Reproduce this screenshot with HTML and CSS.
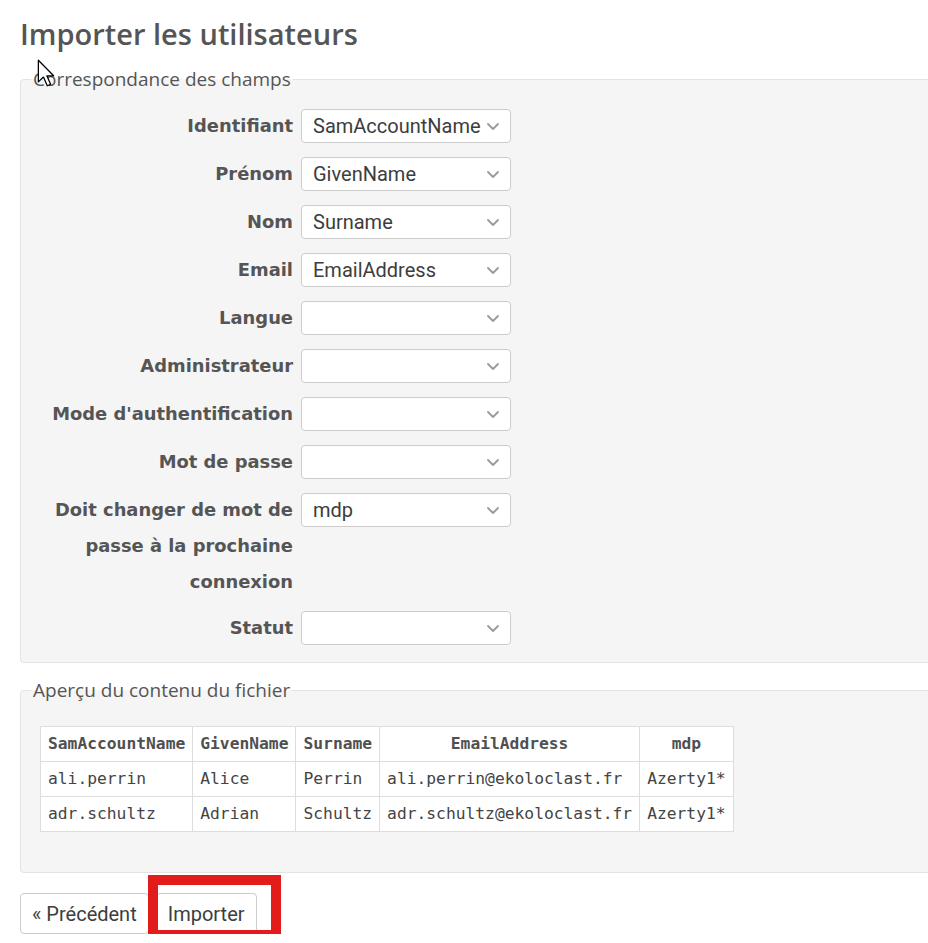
FILE: index.html
```html
<!DOCTYPE html>
<html lang="fr">
<head>
<meta charset="utf-8">
<title>Importer les utilisateurs</title>
<link rel="stylesheet" href="styles.css">
</head>
<body>
<div class="page">
  <h1 class="title">Importer les utilisateurs</h1>

  <fieldset class="panel panel-map">
    <legend class="panel-legend">Correspondance des champs</legend>
    <div class="form-grid">
      <div class="field-label">Identifiant</div>
      <div class="select"><span class="select-value">SamAccountName</span><svg class="chev" viewBox="0 0 12 7" width="12" height="7"><path d="M1 1 L6 6 L11 1" fill="none" stroke="#9a9a9a" stroke-width="1.8" stroke-linecap="round" stroke-linejoin="round"/></svg></div>

      <div class="field-label">Prénom</div>
      <div class="select"><span class="select-value">GivenName</span><svg class="chev" viewBox="0 0 12 7" width="12" height="7"><path d="M1 1 L6 6 L11 1" fill="none" stroke="#9a9a9a" stroke-width="1.8" stroke-linecap="round" stroke-linejoin="round"/></svg></div>

      <div class="field-label">Nom</div>
      <div class="select"><span class="select-value">Surname</span><svg class="chev" viewBox="0 0 12 7" width="12" height="7"><path d="M1 1 L6 6 L11 1" fill="none" stroke="#9a9a9a" stroke-width="1.8" stroke-linecap="round" stroke-linejoin="round"/></svg></div>

      <div class="field-label">Email</div>
      <div class="select"><span class="select-value">EmailAddress</span><svg class="chev" viewBox="0 0 12 7" width="12" height="7"><path d="M1 1 L6 6 L11 1" fill="none" stroke="#9a9a9a" stroke-width="1.8" stroke-linecap="round" stroke-linejoin="round"/></svg></div>

      <div class="field-label">Langue</div>
      <div class="select"><span class="select-value"></span><svg class="chev" viewBox="0 0 12 7" width="12" height="7"><path d="M1 1 L6 6 L11 1" fill="none" stroke="#9a9a9a" stroke-width="1.8" stroke-linecap="round" stroke-linejoin="round"/></svg></div>

      <div class="field-label">Administrateur</div>
      <div class="select"><span class="select-value"></span><svg class="chev" viewBox="0 0 12 7" width="12" height="7"><path d="M1 1 L6 6 L11 1" fill="none" stroke="#9a9a9a" stroke-width="1.8" stroke-linecap="round" stroke-linejoin="round"/></svg></div>

      <div class="field-label">Mode d'authentification</div>
      <div class="select"><span class="select-value"></span><svg class="chev" viewBox="0 0 12 7" width="12" height="7"><path d="M1 1 L6 6 L11 1" fill="none" stroke="#9a9a9a" stroke-width="1.8" stroke-linecap="round" stroke-linejoin="round"/></svg></div>

      <div class="field-label">Mot de passe</div>
      <div class="select"><span class="select-value"></span><svg class="chev" viewBox="0 0 12 7" width="12" height="7"><path d="M1 1 L6 6 L11 1" fill="none" stroke="#9a9a9a" stroke-width="1.8" stroke-linecap="round" stroke-linejoin="round"/></svg></div>

      <div class="field-label field-label-long">Doit changer de mot de passe à la prochaine connexion</div>
      <div class="select"><span class="select-value">mdp</span><svg class="chev" viewBox="0 0 12 7" width="12" height="7"><path d="M1 1 L6 6 L11 1" fill="none" stroke="#9a9a9a" stroke-width="1.8" stroke-linecap="round" stroke-linejoin="round"/></svg></div>

      <div class="field-label">Statut</div>
      <div class="select"><span class="select-value"></span><svg class="chev" viewBox="0 0 12 7" width="12" height="7"><path d="M1 1 L6 6 L11 1" fill="none" stroke="#9a9a9a" stroke-width="1.8" stroke-linecap="round" stroke-linejoin="round"/></svg></div>
    </div>
  </fieldset>

  <fieldset class="panel panel-preview">
    <legend class="panel-legend">Aperçu du contenu du fichier</legend>
    <table class="preview">
      <thead>
        <tr><th>SamAccountName</th><th>GivenName</th><th>Surname</th><th>EmailAddress</th><th>mdp</th></tr>
      </thead>
      <tbody>
        <tr><td>ali.perrin</td><td>Alice</td><td>Perrin</td><td>ali.perrin@ekoloclast.fr</td><td>Azerty1*</td></tr>
        <tr><td>adr.schultz</td><td>Adrian</td><td>Schultz</td><td>adr.schultz@ekoloclast.fr</td><td>Azerty1*</td></tr>
      </tbody>
    </table>
  </fieldset>

  <div class="actions">
    <button class="btn" type="button">« Précédent</button>
    <button class="btn" type="button">Importer</button>
    <div class="highlight"></div>
  </div>

  <svg class="cursor" viewBox="0 0 14 22" width="18" height="28"><path d="M1 1 L1 18 L5 14.2 L8 21 L10.6 19.9 L7.7 13.2 L13 13.2 Z" fill="#fff" stroke="#000" stroke-width="1" stroke-linejoin="round"/></svg>
</div>
</body>
</html>
```

FILE: styles.css
```css
html, body {
  margin: 0;
  padding: 0;
  background: #fff;
  overflow: hidden;
}

.page {
  position: relative;
  padding: 16px 0 0 20px;
  font-family: "Open Sans", "DejaVu Sans", sans-serif;
  color: #555;
}

.title {
  margin: 0;
  font-family: "Open Sans", sans-serif;
  font-weight: 600;
  font-size: 29px;
  line-height: 36px;
  color: #555;
}

.panel {
  box-sizing: border-box;
  width: 1000px;
  margin: 16px 0 0 0;
  padding: 18px 19px 16px 19px;
  background: #f5f5f5;
  border: 1px solid #e3e3e3;
  border-radius: 4px;
  min-inline-size: 0;
}

.panel-legend {
  margin-left: -9px;
  padding: 0 2px;
  font-family: "Open Sans", sans-serif;
  font-size: 19px;
  line-height: 22px;
  color: #555;
}

.form-grid {
  display: grid;
  grid-template-columns: 253px 210px;
  column-gap: 8px;
  row-gap: 12px;
  align-items: start;
}

.field-label {
  text-align: right;
  font-family: "DejaVu Sans", Verdana, sans-serif;
  font-weight: bold;
  font-size: 17.9px;
  line-height: 36px;
  color: #555;
}

.field-label-long {
  margin-bottom: -2px;
}

.select {
  box-sizing: border-box;
  height: 34px;
  margin-top: 1px;
  display: flex;
  align-items: center;
  justify-content: space-between;
  padding: 0 11px 0 11px;
  background: #fff;
  border: 1px solid #ccc;
  border-radius: 4px;
  font-family: Roboto, "Liberation Sans", sans-serif;
  font-size: 20px;
  color: #3d3d3d;
}

.select-value {
  white-space: nowrap;
}

.chev {
  display: block;
  flex: none;
}

.panel-preview {
  padding: 25px 19px 40px 19px;
}

.preview {
  border-collapse: collapse;
  background: #fff;
  font-family: "DejaVu Sans Mono", monospace;
  font-size: 16.3px;
  color: #444;
}

.preview th,
.preview td {
  border: 1px solid #ddd;
  padding: 0 7px;
  height: 34px;
  line-height: 20px;
  white-space: nowrap;
}

.preview th {
  font-weight: bold;
  text-align: center;
  color: #505050;
}

.preview td {
  text-align: left;
}

.actions {
  position: relative;
  display: flex;
  gap: 7px;
  margin-top: 20px;
}

.btn {
  box-sizing: border-box;
  height: 41px;
  padding: 0 11px;
  background: #fff;
  border: 1px solid #ccc;
  border-radius: 4px;
  font-family: Roboto, "Liberation Sans", sans-serif;
  font-size: 20px;
  color: #3d3d3d;
}

.highlight {
  position: absolute;
  left: 128px;
  top: -18px;
  width: 133px;
  height: 65px;
  box-sizing: border-box;
  border: 10px solid #e21b1b;
}

.cursor {
  position: absolute;
  left: 37px;
  top: 59px;
}
```
